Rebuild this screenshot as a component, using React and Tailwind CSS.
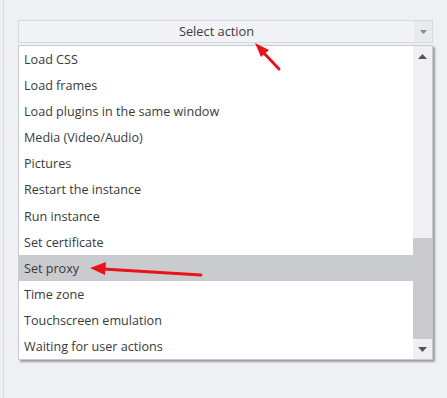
const items = [
  'Load CSS',
  'Load frames',
  'Load plugins in the same window',
  'Media (Video/Audio)',
  'Pictures',
  'Restart the instance',
  'Run instance',
  'Set certificate',
  'Set proxy',
  'Time zone',
  'Touchscreen emulation',
  'Waiting for user actions',
];

const App = () => {
  return (
    <div className="relative w-[447px] h-[398px] bg-[#eff0f4] overflow-hidden" style={{ fontFamily: '"Open Sans", "Noto Sans", sans-serif' }}>
      <div className="absolute left-[3px] top-0 bottom-0 w-px bg-[#d9dadf]" />

      <div className="pt-[20px] pl-[18px] w-[433px]">
        {/* combo header */}
        <div className="flex h-[23px] border border-[#d6d8dd] bg-[#f2f3f6]">
          <div className="flex-1 flex items-center justify-center text-[12.8px] text-[#3a3a3a] pt-[1px]">Select action</div>
          <div className="w-[18px] flex items-center justify-center bg-[#e9eaee]">
            <svg width="7" height="4" viewBox="0 0 7 4"><path d="M0 0h7L3.5 4z" fill="#8a8a8a" /></svg>
          </div>
        </div>

        {/* list */}
        <div className="mt-[2px] flex h-[315px] bg-white border border-[#c9cacf] shadow-[2px_2px_2px_rgba(0,0,0,0.35)]">
          <div className="flex-1 flex flex-col">
            {items.map((t) => (
              <div
                key={t}
                className={`h-[26.27px] flex items-center pl-[5px] pt-[3px] text-[12.6px] text-[#3a3a3a] ${t === 'Set proxy' ? 'bg-[#cacbce]' : ''}`}
              >
                {t}
              </div>
            ))}
          </div>
          <div className="w-[19px] flex flex-col bg-[#f0f0f2]">
            <div className="h-[20px] flex items-center justify-center">
              <svg width="9" height="5" viewBox="0 0 9 5"><path d="M0 5h9L4.5 0z" fill="#555" /></svg>
            </div>
            <div className="flex-1" />
            <div className="h-[101px] bg-[#cbcbcd]" />
            <div className="h-[20px] flex items-center justify-center">
              <svg width="9" height="5" viewBox="0 0 9 5"><path d="M0 0h9L4.5 5z" fill="#555" /></svg>
            </div>
          </div>
        </div>
      </div>

      {/* red annotation arrows */}
      <svg className="absolute inset-0 pointer-events-none" width="447" height="398">
        <line x1="279" y1="69" x2="262" y2="51" stroke="#e8141b" strokeWidth="3" strokeLinecap="round" />
        <path d="M255 43 L269 50 L261 57 Z" fill="#e8141b" />
        <line x1="201" y1="275" x2="103" y2="269" stroke="#e8141b" strokeWidth="3" strokeLinecap="round" />
        <path d="M90 268 L106 262 L105 275 Z" fill="#e8141b" />
      </svg>
    </div>
  );
};

export default App;
